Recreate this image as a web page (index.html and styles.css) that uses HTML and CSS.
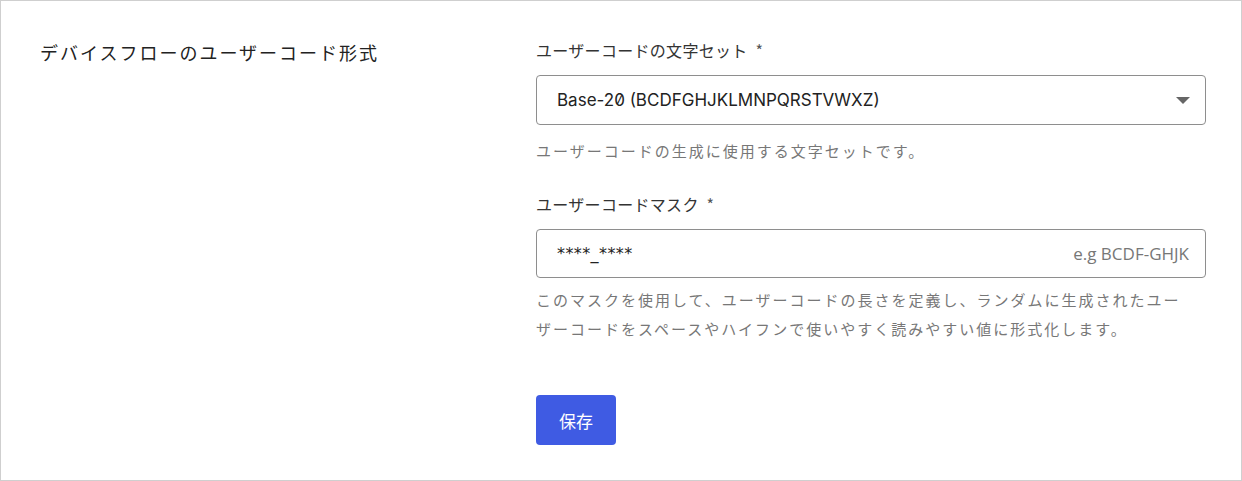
FILE: index.html
```html
<!DOCTYPE html>
<html lang="ja">
<head>
<meta charset="utf-8">
<link rel="stylesheet" href="styles.css">
</head>
<body>
<div class="panel">
  <div class="title-col">
    <h2 class="title">デバイスフローのユーザーコード形式</h2>
  </div>
  <div class="form-col">
    <div class="field">
      <div class="label">ユーザーコードの文字セット <span class="req">*</span></div>
      <div class="select">
        <span class="value">Base-20 (BCDFGHJKLMNPQRSTVWXZ)</span>
        <span class="caret"></span>
      </div>
      <div class="help">ユーザーコードの生成に使用する文字セットです。</div>
    </div>
    <div class="field field-2">
      <div class="label">ユーザーコードマスク <span class="req">*</span></div>
      <div class="input">
        <span class="value mask">****_****</span>
        <span class="hint">e.g BCDF-GHJK</span>
      </div>
      <div class="help help-long">このマスクを使用して、ユーザーコードの長さを定義し、ランダムに生成されたユーザーコードをスペースやハイフンで使いやすく読みやすい値に形式化します。</div>
    </div>
    <div class="actions">
      <button class="btn">保存</button>
    </div>
  </div>
</div>
</body>
</html>
```

FILE: styles.css
```css
* { box-sizing: border-box; }
html, body { margin: 0; padding: 0; background: #fff; }
body {
  font-family: "Noto Sans CJK JP", "Noto Sans", sans-serif;
  color: #222;
}
.panel {
  width: 1242px;
  height: 481px;
  border: 1px solid #cfcfcf;
  display: grid;
  grid-template-columns: 496px 670px;
  padding: 0 0 0 39px;
}
.title-col { padding-top: 37px; }
.title {
  margin: 0;
  font-size: 18px;
  font-weight: 400;
  letter-spacing: 2px;
  line-height: 28px;
  color: #222;
}
.form-col { padding-top: 36px; }
.label {
  font-size: 16px;
  line-height: 26px;
  color: #333;
  letter-spacing: 0.3px;
}
.req { color: #555; margin-left: 4px; }
.select, .input {
  margin-top: 12px;
  height: 50px;
  border: 1px solid #8e8e8e;
  border-radius: 4px;
  display: flex;
  align-items: center;
  justify-content: space-between;
  padding: 0 16px 0 20px;
}
.input { height: 49px; }
.value {
  font-family: Inter, "Noto Sans", sans-serif;
  font-feature-settings: "zero" 1;
  font-size: 17px;
  color: #222;
}
.mask {
  font-family: "DejaVu Sans", sans-serif;
  font-size: 16px;
  letter-spacing: 0.4px;
  color: #222;
}
.caret {
  width: 0;
  height: 0;
  border-left: 7px solid transparent;
  border-right: 7px solid transparent;
  border-top: 7px solid #666;
  margin-right: -1px;
}
.hint {
  font-family: "Open Sans", "Noto Sans", sans-serif;
  font-size: 17px;
  color: #777;
}
.help {
  margin-top: 11px;
  max-width: 660px;
  font-size: 15px;
  letter-spacing: 2px;
  line-height: 29px;
  color: #777;
}
.field-2 { margin-top: 26px; }
.help-long { margin-top: 7px; }
.actions { margin-top: 52px; }
.btn {
  width: 80px;
  height: 50px;
  border: none;
  border-radius: 4px;
  background: #3f5be3;
  color: #fff;
  font-family: "Noto Sans CJK JP", sans-serif;
  font-size: 17px;
  padding: 0;
}
```
